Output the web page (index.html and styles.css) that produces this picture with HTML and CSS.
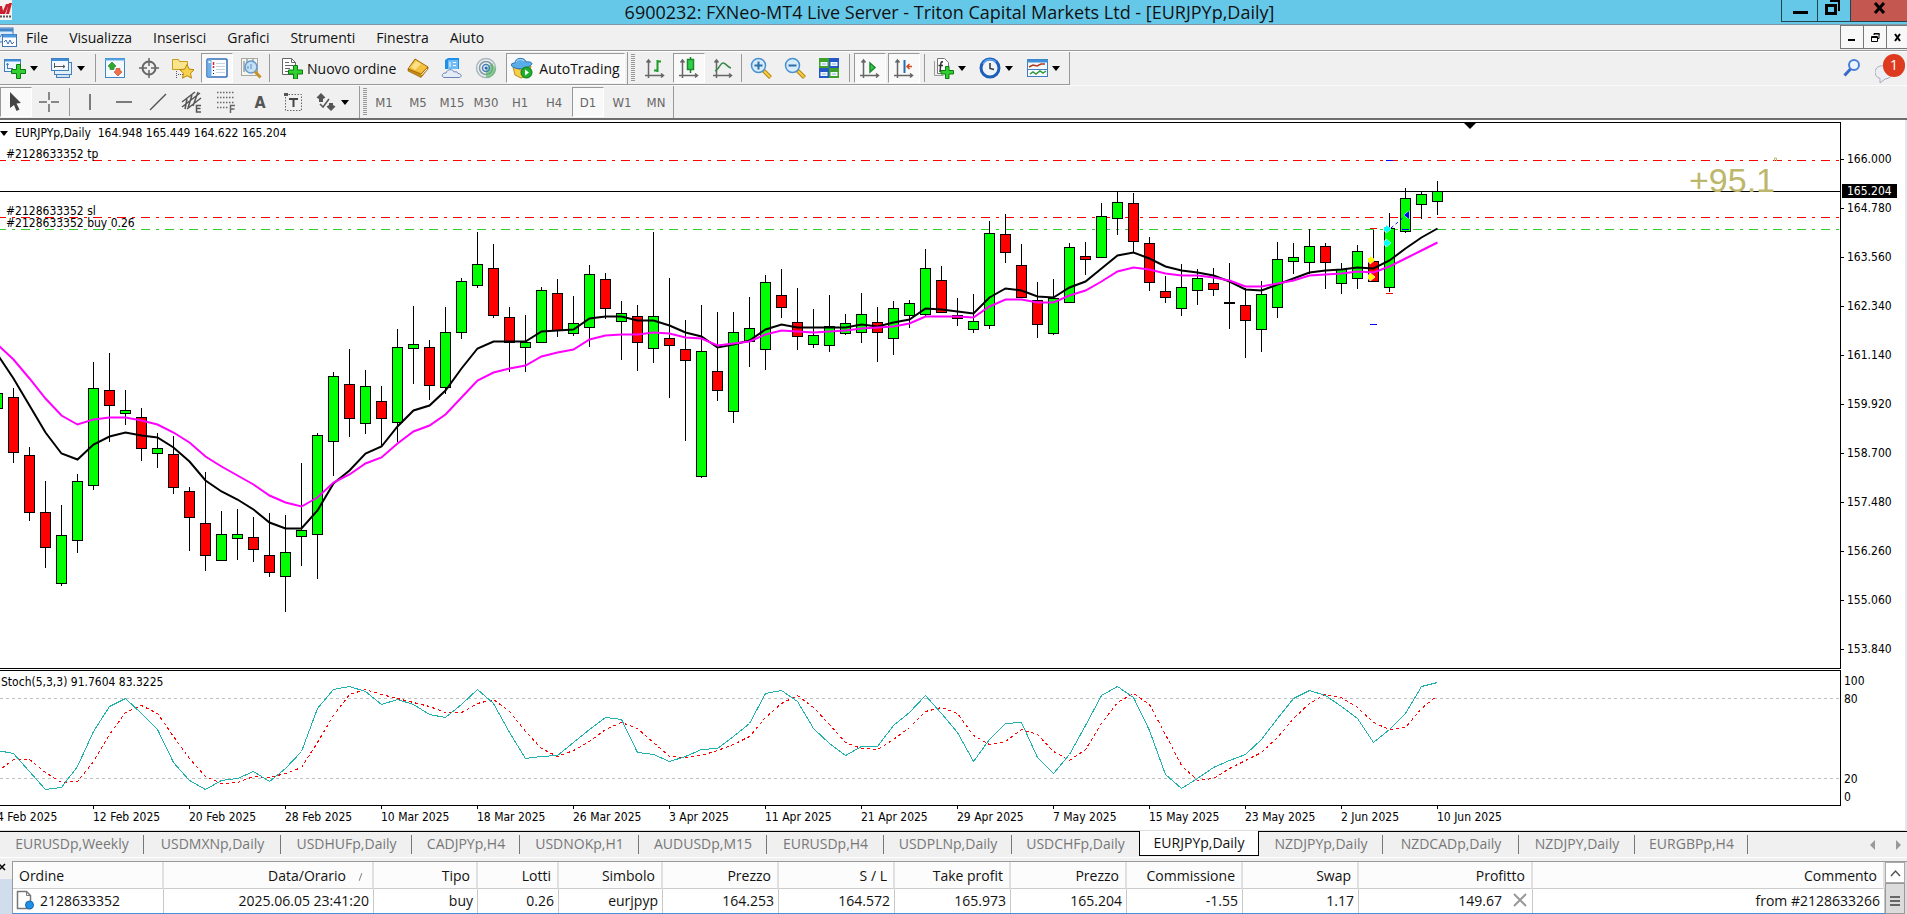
FILE: index.html
```html
<!DOCTYPE html>
<html lang="it">
<head>
<meta charset="utf-8">
<title>6900232: FXNeo-MT4 Live Server - Triton Capital Markets Ltd - [EURJPYp,Daily]</title>
<link rel="stylesheet" href="styles.css">
</head>
<body>
<div class="app">
  <header class="titlebar">
    <svg class="app-logo" width="12" height="20" viewBox="0 0 12 20" aria-hidden="true"><rect width="12" height="20" fill="#f6f2f2"/><path d="M-2 6h4l1 5 3-7h3l-4 10H-2zM9 3h3l-3 11H6z" fill="#c8202c"/><path d="M0 16.500h11" stroke="#555" stroke-width="2" stroke-dasharray="2 1"/></svg>
    <h1 class="title">6900232: FXNeo-MT4 Live Server - Triton Capital Markets Ltd - [EURJPYp,Daily]</h1>
    <div class="win-buttons">
      <button class="win-btn win-min" aria-label="Riduci a icona"><svg width="36" height="22" viewBox="0 0 36 22"><path d="M11 11h15v3H11z"/></svg></button>
      <button class="win-btn win-max" aria-label="Ripristina"><svg width="32" height="22" viewBox="0 0 32 22"><path d="M8.500 5.500h9v8h-9z" fill="none" stroke="#000" stroke-width="3"/><path d="M12 1h9v10" fill="none" stroke="#000" stroke-width="2"/></svg></button>
      <button class="win-btn win-close" aria-label="Chiudi"><svg width="56" height="22" viewBox="0 0 56 22"><path d="M24 3l9 10M33 3l-9 10" stroke="#000" stroke-width="3"/></svg></button>
    </div>
  </header>

  <div class="menubar">
    <svg class="doc-icon" width="18" height="21" viewBox="0 0 18 21" aria-hidden="true"><rect x="-2" y="1" width="15" height="14" fill="#d8ebfa" stroke="#3f74b5"/><path d="M-2 3h15" stroke="#3f86c8" stroke-width="3"/><path d="M0 10l2-3 2 4" fill="none" stroke="#3870c0"/><rect x="2.500" y="7.500" width="14" height="12" fill="#fff" stroke="#3f74b5"/><path d="M3 9h13" stroke="#4c9be0" stroke-width="3"/><path d="M4 15l2-2 2 4 2-4 2 4 2-2" fill="none" stroke="#3870c0"/></svg>
    <nav class="menu">
      <button class="menu-item">File</button><button class="menu-item">Visualizza</button><button class="menu-item">Inserisci</button><button class="menu-item">Grafici</button><button class="menu-item">Strumenti</button><button class="menu-item">Finestra</button><button class="menu-item">Aiuto</button>
    </nav>
    <div class="mdi-buttons">
      <button class="mdi-btn" aria-label="Riduci grafico"><svg width="22" height="22" viewBox="0 0 22 22"><path d="M7 13h7v2H7z"/></svg></button>
      <button class="mdi-btn" aria-label="Ripristina grafico"><svg width="22" height="22" viewBox="0 0 22 22"><path d="M7.500 10.500h6v5h-6zM7 11.500h7M10 9V7.500h5v5h-1M10 8h6" fill="none" stroke="#000"/></svg></button>
      <button class="mdi-btn" aria-label="Chiudi grafico"><svg width="22" height="22" viewBox="0 0 22 22"><path d="M8 8l5 7M13 8l-5 7" stroke="#000" stroke-width="2"/></svg></button>
    </div>
  </div>

  <div class="toolbar-row">
    <div class="toolbar toolbar-main">
      <button class="tool tool-drop" aria-label="Nuovo grafico"><svg class="ico" viewBox="0 0 22 22"><rect x=".5" y="2.500" width="16" height="12" fill="#eef7ff" stroke="#3f7fc0"/><path d="M1 3.500h15" stroke="#3f8fd8" stroke-width="2"/><path d="M3.500 12V7m-1 1l1-2 1 2M3 11.500h6" stroke="#4a7aa8" fill="none"/><path d="M12.500 7.500h4v5h5v4h-5v5h-4v-5h-5v-4h5z" fill="#2fd02f" stroke="#0c7a12"/></svg><i class="caret"></i></button>
      <button class="tool tool-drop" aria-label="Profili"><svg class="ico" viewBox="0 0 22 22"><rect x="5.500" y="9.500" width="13" height="11" fill="#cfe3f5" stroke="#4a7fb5"/><rect x="3.500" y="5.500" width="17" height="12" fill="#e2f0fb" stroke="#4a7fb5"/><rect x=".5" y="1.500" width="17" height="12" fill="#f3f9ff" stroke="#3f7fc0"/><path d="M1 3h16" stroke="#3f8fd8" stroke-width="2"/><path d="M3.500 6v5M3 9.500h11M12 8l2 1.500-2 1.500" stroke="#555" fill="none"/></svg><i class="caret"></i></button>
      <i class="sep"></i>
      <button class="tool" aria-label="Market Watch"><svg class="ico" viewBox="0 0 22 22"><rect x="1.500" y="1.500" width="19" height="19" fill="#f4fbff" stroke="#3f86c8"/><path d="M1 2.500h20" stroke="#56a4e4" stroke-width="2"/><path d="M8 5l4 4-2 1.500v2H6v-2L4 9z" fill="#2ea82e" stroke="#1a7a1a" stroke-width=".6"/><path d="M14 19l-4-4 2-1.500v-2h4v2l2 1.500z" fill="#f07048" stroke="#c03a18" stroke-width=".6"/></svg></button>
      <button class="tool" aria-label="Finestra dati"><svg class="ico" viewBox="0 0 22 22" fill="none" stroke="#666"><circle cx="11" cy="11" r="6.500" stroke-width="2"/><path d="M11 1v8M11 13v8M1 11h8M13 11h8" stroke-width="1.500"/></svg></button>
      <button class="tool" aria-label="Navigatore"><svg class="ico" viewBox="0 0 22 22"><path d="M.5 2.500h6l1 2h8v8H.5z" fill="#fbe58a" stroke="#c99a20"/><path d="M4.500 14v7M6 17.500h5" stroke="#555" stroke-dasharray="1 1"/><path d="M15 7.500l2.200 4.600 5 .6-3.700 3.500 1 5L15 18.700l-4.500 2.500 1-5-3.700-3.500 5-.6z" fill="#f8d24a" stroke="#b8860b"/></svg></button>
      <button class="tool pressed" aria-label="Terminale"><svg class="ico" viewBox="0 0 22 22"><rect x="1" y="2" width="20" height="18" rx="1" fill="#fff" stroke="#2f6fb5" stroke-width="1.500"/><rect x="1.500" y="2.500" width="4" height="17" fill="#6fb0ec"/><path d="M3.500 4v2" stroke="#fff" stroke-width="2"/><path d="M10 6.500h9M10 9.500h9M10 12.500h9M10 15.500h9" stroke="#c7d4e2"/><path d="M7.500 5v3M7.500 9v2" stroke="#d22" stroke-width="1.500"/><path d="M7 13.500h1M7 16.500h1" stroke="#111"/></svg></button>
      <button class="tool" aria-label="Strategy Tester"><svg class="ico" viewBox="0 0 22 22"><rect x="1.500" y="1.500" width="16" height="17" fill="#f5f5f0" stroke="#a8a8a0"/><path d="M4 4v11M7 2v9M13 2v5" stroke="#777"/><circle cx="11" cy="10" r="6" fill="#bfe0f7" fill-opacity=".9" stroke="#6699cc" stroke-width="1.500"/><path d="M11 7v5M8 9v3" stroke="#5a88b8"/><path d="M15 14.500l5.500 6" stroke="#c8922a" stroke-width="3"/></svg></button>
      <i class="sep"></i>
      <button class="tool tool-text tool-order"><svg class="ico" viewBox="0 0 22 22"><path d="M1.500 1.500h9l4 4v12h-13z" fill="#fff" stroke="#666"/><path d="M10.500 1.500v4h4M4 5.500h4M4 8.500h8M4 11.500h5M4 14.500h3" stroke="#666" fill="none"/><path d="M12.500 8.500h4v4.500h5v4h-5v5h-4v-5h-5v-4h5z" fill="#2fd02f" stroke="#0c7a12"/></svg>Nuovo ordine</button>
      <button class="tool" aria-label="MetaEditor"><svg class="ico" viewBox="0 0 22 22"><path d="M1 12L8 2l13 8-6 9z" fill="#e8a820" stroke="#9a6a08"/><path d="M2 11l6.500-8L20 10l-6 6z" fill="#f4c040"/><path d="M4 10l5-6 5 3-6 6z" fill="#fbe08a"/><path d="M1 12l13 5 7-7v2l-7 8.500L1 14z" fill="#c98a10" stroke="#8a5c06" stroke-width=".6"/><path d="M14.500 18l5.500-6" stroke="#fff"/></svg></button>
      <button class="tool" aria-label="VPS"><svg class="ico" viewBox="0 0 22 22"><path d="M4 3l3-2h11v11H4z" fill="#1e90e8"/><path d="M7 3h10v9H7z" fill="#6fbdf8"/><path d="M9 5v5M12 5.500h3M12 8.500h3" stroke="#fff"/><path d="M3 20.500c-3-1-2-5 2-4.500 1-4 7-4.500 8-1 3-1 4 1 4 1.500 4 0 4 4 1 4z" fill="#e4ecf8" stroke="#6a84b8"/></svg></button>
      <button class="tool" aria-label="Segnali"><svg class="ico" viewBox="0 0 22 22" fill="none"><circle cx="11" cy="11" r="9.500" stroke="#a9b8bf" stroke-width="1.500"/><circle cx="11" cy="11" r="6.500" stroke="#7f9aa8" stroke-width="1.500"/><path d="M11 11v10a10 10 0 0 0 10-9l-4-6z" fill="#4fb65c" fill-opacity=".6"/><circle cx="11" cy="11" r="3.500" stroke="#4a7fb5" stroke-width="1.500"/><circle cx="11" cy="11" r="1.500" fill="#2a6ad0"/></svg></button>
      <button class="tool tool-text tool-auto pressed"><svg class="ico" viewBox="0 0 22 22"><path d="M2 10l8 3 10-4-2 9-8 3-6-3z" fill="#f5cf48" stroke="#b8901a"/><path d="M0 8c0-2 4-2 4-2 0-6 10-6 11-1 3-.5 6 0 6 2-3 5-18 7-21 1z" fill="#5aaee8" stroke="#2a78b8"/><path d="M5 5c1-3 6-3 8-1" stroke="#bfe2fb" fill="none"/><circle cx="15.500" cy="15.500" r="5.500" fill="#1faf2f" stroke="#0c7a12"/><path d="M14 12.500l4 3-4 3z" fill="#fff"/></svg>AutoTrading</button>
      <i class="sep sep-end"></i><i class="grip"></i>
      <button class="tool" aria-label="Grafico a barre"><svg class="ico" viewBox="0 0 22 22" fill="none" stroke="#666" stroke-width="1.500"><path d="M4.500 3v18M1 18.500h18M2.500 5.500l2-2.500 2 2.500M17 16.500l2.500 2-2.500 2"/><path d="M13.500 3v12M13 4.500h4M10 13.500h4" stroke="#1c9a2c" stroke-width="2"/></svg></button>
      <button class="tool pressed" aria-label="Grafico a candele"><svg class="ico" viewBox="0 0 22 22" fill="none" stroke="#666" stroke-width="1.500"><path d="M4.500 3v18M1 18.500h18M2.500 5.500l2-2.500 2 2.500M17 16.500l2.500 2-2.500 2"/><path d="M12.500 0v16" stroke="#1c7a2c"/><rect x="9.500" y="2.500" width="6" height="10" fill="#2fd04a" stroke="#1c8a2c"/></svg></button>
      <button class="tool" aria-label="Grafico a linea"><svg class="ico" viewBox="0 0 22 22" fill="none" stroke="#666" stroke-width="1.500"><path d="M4.500 3v18M1 18.500h18M2.500 5.500l2-2.500 2 2.500M17 16.500l2.500 2-2.500 2"/><path d="M3 14c4-1 5-8 8-8s4 4 8 5" stroke="#3a8a4a"/></svg></button>
      <i class="sep"></i>
      <button class="tool" aria-label="Ingrandisci"><svg class="ico" viewBox="0 0 22 22"><path d="M13.500 13.500l7 7" stroke="#b8860b" stroke-width="4"/><path d="M14 14l6 6" stroke="#f5cf48" stroke-width="2"/><circle cx="8.500" cy="8.500" r="7" fill="#d4ecfb" stroke="#4a8fd0" stroke-width="1.500"/><path d="M4.500 8.500h8M8.500 4.500v8" stroke="#2f6fa8" stroke-width="2"/></svg></button>
      <button class="tool" aria-label="Riduci"><svg class="ico" viewBox="0 0 22 22"><path d="M13.500 13.500l7 7" stroke="#b8860b" stroke-width="4"/><path d="M14 14l6 6" stroke="#f5cf48" stroke-width="2"/><circle cx="8.500" cy="8.500" r="7" fill="#d4ecfb" stroke="#4a8fd0" stroke-width="1.500"/><path d="M4.500 8.500h8" stroke="#2f6fa8" stroke-width="2"/></svg></button>
      <button class="tool" aria-label="Affianca"><svg class="ico" viewBox="0 0 22 22"><path d="M1 1h10v10H1zM11 11h10v10H11z" fill="#3fa02a"/><path d="M11 1h10v10H11zM1 11h10v10H1z" fill="#2458c8"/><path d="M2.500 5h7v4h-7zM12.500 5h7v4h-7zM2.500 15h7v4h-7zM12.500 15h7v4h-7z" fill="#eef6ff"/><path d="M4 7h4M14 7h4M4 17h4M14 17h4" stroke="#8fb0d8"/></svg></button>
      <i class="sep sep-wide"></i>
      <button class="tool pressed" aria-label="Scorrimento automatico"><svg class="ico" viewBox="0 0 22 22" fill="none" stroke="#666" stroke-width="1.500"><path d="M4.500 3v18M1 18.500h18M2.500 5.500l2-2.500 2 2.500M17 16.500l2.500 2-2.500 2"/><path d="M11 6l5 4.500-5 4.500z" fill="#2fd04a" stroke="#1c8a2c"/></svg></button>
      <button class="tool pressed" aria-label="Spostamento grafico"><svg class="ico" viewBox="0 0 22 22" fill="none" stroke="#666" stroke-width="1.500"><path d="M4.500 3v18M1 18.500h18M2.500 5.500l2-2.500 2 2.500M17 16.500l2.500 2-2.500 2"/><path d="M11.500 3v13" stroke="#1f6fb8" stroke-width="2"/><path d="M14 9.500h5M16.500 7l-2.500 2.500 2.500 2.500" stroke="#d04a18" stroke-width="1.500"/></svg></button>
      <i class="sep sep-wide"></i>
      <button class="tool tool-drop" aria-label="Indicatori"><svg class="ico" viewBox="0 0 22 22"><path d="M5.500 1.500h7l4 4v11h-11z" fill="#fff" stroke="#777"/><path d="M2.500 4v14.500h9" fill="none" stroke="#999"/><path d="M11 5c-3-1-2 3-3 10M6.500 8.500H11" stroke="#333" fill="none" stroke-width="1.500"/><path d="M13.500 9.500h3.500v4h4.500v3.500H17v4.500h-3.500V17H9v-3.500h4.500z" fill="#2fd02f" stroke="#0c7a12"/></svg><i class="caret"></i></button>
      <button class="tool tool-drop" aria-label="Periodi"><svg class="ico" viewBox="0 0 22 22"><circle cx="11" cy="11" r="9" fill="#eef3f8" stroke="#1d5fb8" stroke-width="3"/><path d="M4 7a8 8 0 0 1 13-2" stroke="#5aa4ec" stroke-width="1.500" fill="none"/><path d="M11 6v5.500l4 1" stroke="#333" fill="none" stroke-width="1.500"/></svg><i class="caret"></i></button>
      <button class="tool tool-drop" aria-label="Modelli"><svg class="ico" viewBox="0 0 22 22"><rect x="1.500" y="2.500" width="20" height="17" fill="#f4faff" stroke="#3f7fc0"/><path d="M1 4h21" stroke="#3f8fd8" stroke-width="3"/><path d="M1 12.500h21" stroke="#3f7fc0"/><path d="M3 10l4-2 4 1 4-2h4" stroke="#b03a20" fill="none" stroke-width="1.500"/><path d="M4 17l3-2 3 2 4-3 3 2 3-2" stroke="#2f9a3a" fill="none" stroke-width="1.500"/></svg><i class="caret"></i></button>
    </div>
    <div class="status-tools">
      <button class="tool-bare" aria-label="Cerca"><svg width="18" height="20" viewBox="0 0 18 20" fill="none"><circle cx="11" cy="7" r="5" stroke="#4a7fd8" stroke-width="2" fill="#eaf3ff"/><path d="M7.500 11l-6 6.500" stroke="#3868c8" stroke-width="3"/></svg></button>
      <button class="tool-bare notice" aria-label="Notifiche"><svg width="20" height="22" viewBox="0 0 20 22"><path d="M9 4a8 6.500 0 0 1 1 13l-5 4v-4.500A7 6.500 0 0 1 9 4z" fill="#eceef4" stroke="#a8acb8"/></svg><span class="badge">1</span></button>
    </div>
  </div>

  <div class="toolbar-row toolbar-row-2">
    <div class="toolbar toolbar-draw">
      <button class="tool pressed tool-cursor" aria-label="Cursore"><svg class="ico" viewBox="0 0 22 22"><path d="M5 1l11 11-4.500.5 3 6-3 1.500-2.500-6L5 17z" fill="#444"/></svg></button>
      <button class="tool" aria-label="Mirino"><svg class="ico" viewBox="0 0 22 22" stroke="#666" stroke-width="1.500"><path d="M11 1v8M11 13v8M1 11h8M13 11h8"/></svg></button>
      <i class="sep sep-wide"></i>
      <button class="tool" aria-label="Linea verticale"><svg class="ico" viewBox="0 0 22 22" stroke="#555" stroke-width="1.500"><path d="M11 3v16"/></svg></button>
      <button class="tool" aria-label="Linea orizzontale"><svg class="ico" viewBox="0 0 22 22" stroke="#555" stroke-width="1.500"><path d="M3 11h16"/></svg></button>
      <button class="tool" aria-label="Trendline"><svg class="ico" viewBox="0 0 22 22" stroke="#555" stroke-width="1.500"><path d="M3 19L19 3"/></svg></button>
      <button class="tool" aria-label="Canale equidistante"><svg class="ico" viewBox="0 0 22 22" fill="none" stroke="#555" stroke-width="1.500"><path d="M1 16L19 2M1 11L14 1M6 18L20 7M6 8l-2 10M11 4L7 17M17 1l-5 14"/><path d="M20 14.500h-4.500v6.500H20M15.500 17.500h4"/></svg></button>
      <button class="tool" aria-label="Fibonacci"><svg class="ico" viewBox="0 0 22 22" fill="none" stroke="#666" stroke-width="1.500"><path d="M2 1.500h18M2 6.500h18M2 11.500h18M2 16.500h11" stroke-dasharray="1.500 1.500"/><path d="M15.500 22v-7.500H20M15.500 18h4"/></svg></button>
      <button class="tool tool-letter" aria-label="Testo">A</button>
      <button class="tool" aria-label="Etichetta"><svg class="ico" viewBox="0 0 22 22" fill="none" stroke="#666"><path d="M2.500 3.500h16v16h-16z" stroke-dasharray="1.500 1.500"/><path d="M6 8h9M10.500 7v9" stroke="#444" stroke-width="2"/><path d="M1 2h4v3H1z" fill="#555" stroke="none"/></svg></button>
      <button class="tool tool-drop" aria-label="Frecce"><svg class="ico" viewBox="0 0 22 22"><path d="M6 2l4.500 4.500L8 8v3H4V8L1.500 6.500zM16 20l-4.500-4.500L14 14v-2h4v2l2.500 1.500z" fill="#555"/><path d="M5 13l3 3 6-8" stroke="#555" stroke-width="1.500" fill="none"/></svg><i class="caret"></i></button>
      <i class="sep sep-end"></i><i class="grip"></i>
      <button class="tf">M1</button><button class="tf">M5</button><button class="tf">M15</button><button class="tf">M30</button><button class="tf">H1</button><button class="tf">H4</button><button class="tf pressed">D1</button><button class="tf">W1</button><button class="tf">MN</button>
    </div>
  </div>

  <main class="chart">
    <section class="pane pane-price">
      <div class="plot">
        <svg id="price" class="canvas" role="img" aria-label="EURJPYp Daily"></svg>
        <p class="caption"><i class="caret"></i>EURJPYp,Daily&nbsp; 164.948 165.449 164.622 165.204</p>
        <p class="order order-tp">#2128633352 tp</p>
        <p class="order order-sl">#2128633352 sl</p>
        <p class="order order-buy">#2128633352 buy 0.26</p>
        <p class="pips">+95.1</p>
      </div>
      <div class="axis">
        <ul class="prices"><li>166.000</li><li>164.780</li><li>163.560</li><li>162.340</li><li>161.140</li><li>159.920</li><li>158.700</li><li>157.480</li><li>156.260</li><li>155.060</li><li>153.840</li></ul>
        <span class="bid">165.204</span>
      </div>
    </section>
    <section class="pane pane-stoch">
      <div class="plot">
        <svg id="stoch" class="canvas" role="img" aria-label="Stocastico"></svg>
        <p class="caption caption-stoch">Stoch(5,3,3) 91.7604 83.3225</p>
      </div>
      <div class="axis levels"><div><span>100</span><span>80</span></div><div><span>20</span><span>0</span></div></div>
    </section>
    <ol class="dates"><li>4 Feb 2025</li><li>12 Feb 2025</li><li>20 Feb 2025</li><li>28 Feb 2025</li><li>10 Mar 2025</li><li>18 Mar 2025</li><li>26 Mar 2025</li><li>3 Apr 2025</li><li>11 Apr 2025</li><li>21 Apr 2025</li><li>29 Apr 2025</li><li>7 May 2025</li><li>15 May 2025</li><li>23 May 2025</li><li>2 Jun 2025</li><li>10 Jun 2025</li></ol>
  </main>

  <div class="tabs">
    <div class="tab-list"><button class="tab">EURUSDp,Weekly</button><button class="tab">USDMXNp,Daily</button><button class="tab">USDHUFp,Daily</button><button class="tab">CADJPYp,H4</button><button class="tab">USDNOKp,H1</button><button class="tab">AUDUSDp,M15</button><button class="tab">EURUSDp,H4</button><button class="tab">USDPLNp,Daily</button><button class="tab before">USDCHFp,Daily</button><button class="tab current">EURJPYp,Daily</button><button class="tab">NZDJPYp,Daily</button><button class="tab">NZDCADp,Daily</button><button class="tab">NZDJPY,Daily</button><button class="tab">EURGBPp,H4</button></div>
    <div class="tab-scroll"><button class="tool-bare" aria-label="Schede precedenti"><svg width="6" height="10" viewBox="0 0 6 10"><path d="M5 0v10L0 5z" fill="#999"/></svg></button><button class="tool-bare" aria-label="Schede successive"><svg width="6" height="10" viewBox="0 0 6 10"><path d="M1 0v10l5-5z" fill="#999"/></svg></button></div>
  </div>

  <section class="terminal">
    <div class="dock"><button class="tool-bare dock-close" aria-label="Chiudi terminale"><svg width="12" height="17" viewBox="0 0 12 17"><path d="M-1 3l6 6M5 3l-6 6" stroke="#000" stroke-width="1.500"/></svg></button><div class="dock-side"></div></div>
    <table class="orders">
      <colgroup><col class="w150"><col class="w210"><col class="w104"><col class="w81"><col class="w104"><col class="w116"><col class="w116"><col class="w116"><col class="w116"><col class="w116"><col class="w116"><col class="w174"><col></colgroup>
      <thead><tr><th>Ordine</th><th class="sorted">Data/Orario<i class="slash"></i></th><th>Tipo</th><th>Lotti</th><th>Simbolo</th><th>Prezzo</th><th>S / L</th><th>Take profit</th><th>Prezzo</th><th>Commissione</th><th>Swap</th><th>Profitto</th><th>Commento</th></tr></thead>
      <tbody><tr><td><span class="ticket"><svg width="18" height="20" viewBox="0 0 18 20"><path d="M1.500 1.500h9l4 4v13h-13z" fill="#fff" stroke="#777" stroke-width="1.500"/><path d="M10.500 1.500v4h4" fill="none" stroke="#777"/><circle cx="13.500" cy="15" r="4" fill="#1e90e8" stroke="#1566a8"/></svg>2128633352</span></td><td>2025.06.05 23:41:20</td><td>buy</td><td>0.26</td><td>eurjpyp</td><td>164.253</td><td>164.572</td><td>165.973</td><td>165.204</td><td>-1.55</td><td>1.17</td><td><span class="profit">149.67<button class="tool-bare" aria-label="Chiudi ordine"><svg width="14" height="14" viewBox="0 0 14 14"><path d="M1 1l12 12M13 1L1 13" stroke="#999" stroke-width="2"/></svg></button></span></td><td>from #2128633266</td></tr></tbody>
    </table>
    <div class="scroll"><button class="scroll-up" aria-label="Scorri su"><svg width="20" height="19" viewBox="0 0 20 19"><path d="M5 13l4.500-5 4.500 5" fill="none" stroke="#555" stroke-width="1.500"/></svg></button><div class="scroll-thumb"><i></i><i></i><i></i></div></div>
  </section>
</div>
<script src="chart.js"></script>
</body>
</html>
```

FILE: styles.css
```css
* { box-sizing: border-box; }
body { margin: 0; font-family: "Open Sans", "Noto Sans", sans-serif; font-size: 14px; color: #111; background: #f0f0f0; }
button { font: inherit; color: inherit; background: none; border: 0; padding: 0; margin: 0; }
svg { display: block; flex: none; }
p, ul, ol, h1 { margin: 0; padding: 0; list-style: none; font-weight: normal; }
.app { display: flex; flex-direction: column; height: 100vh; overflow: hidden; }

.titlebar { flex: none; height: 25px; display: flex; align-items: flex-start; background: #66c8e9; border-bottom: 1px solid #7d98a6; }
.app-logo { width: 12px; }
.title { flex: 1; padding-left: 106px; text-align: center; font-size: 18px; line-height: 24px; white-space: nowrap; }
.win-buttons { display: flex; }
.win-btn { height: 22px; border: 1px solid #23434f; border-top: 0; border-right: 0; overflow: hidden; }
.win-min { width: 36px; }
.win-max { width: 33px; }
.win-close { width: 57px; background: #c4574f; }

.menubar { flex: none; height: 26px; display: flex; align-items: center; border-bottom: 1px solid #999; }
.doc-icon { width: 18px; }
.menu { flex: 1; display: flex; gap: 21px; padding-left: 8px; }
.menu-item { line-height: 24px; }
.mdi-buttons { display: flex; align-self: flex-start; overflow: hidden; width: 67px; }
.mdi-btn { flex: none; width: 23px; height: 24px; background: #f8f8f8; border: 1px solid #777; border-right: 0; }

.toolbar-row { flex: none; height: 34px; display: flex; justify-content: space-between; border-top: 1px solid #fff; }
.toolbar-row-2 { height: 35px; border-bottom: 2px solid #6e6e6e; border-top-color: #fbfbfb; }
.toolbar { display: flex; align-items: center; border-right: 1px solid #999; }
.toolbar-main { border-bottom: 1px solid #999; }
.tool { flex: none; width: 34px; height: 30px; display: flex; align-items: center; justify-content: center; border: 1px solid transparent; }
.ico { width: 22px; height: 22px; }
.pressed { background: #f9f9f9; border-color: #999 #fff #fff #999; }
.tool.pressed { width: 32px; margin: 0 1px; }
.tool-drop { width: 47px; gap: 4px; padding-left: 3px; justify-content: flex-start; }
.tool-cursor.tool { margin: 0; }
.tool-text, .tool-text.tool.pressed { width: auto; gap: 4px; padding: 0 4px; }
.tool-text.tool-order { padding-left: 8px; }
.tool-text.tool.pressed { margin: 0 1px 0 3px; gap: 6px; }
.tool-letter { font: bold 16px "DejaVu Sans Condensed", sans-serif; color: #555; }
.caret { flex: none; width: 8px; border: 4px solid transparent; border-top: 5px solid #000; border-bottom: 0; }
.sep { flex: none; width: 1px; height: 28px; margin: 0 2px 0 1px; background: #999; }
.sep-wide { margin: 0 3px; }
.sep-end { height: 32px; margin: 0 3px 0 1px; }
.grip { flex: none; width: 4px; height: 28px; margin-right: 3px; background: repeating-linear-gradient(#999 0 1px, #f0f0f0 1px 2px); }
.toolbar-draw .grip { margin-right: 0; }
.status-tools { display: flex; align-items: flex-start; gap: 14px; padding: 6px 12px 0 0; }
.tool-bare { display: block; }
.notice { position: relative; padding-top: 4px; }
.badge { position: absolute; left: 8px; top: -4px; width: 22px; height: 23px; border-radius: 11px; background: #dd3a20; color: #fff; line-height: 22px; }
.tf { width: 34px; height: 30px; font: 13px "DejaVu Sans Condensed", sans-serif; color: #666; border: 1px solid transparent; }
.tf.pressed { width: 32px; margin: 0 1px; border-color: #999 #fff #fff #999; }

.chart { flex: 1; min-height: 0; display: flex; flex-direction: column; padding-top: 2px; background: #fff; font: 12px/14px "DejaVu Sans Condensed", sans-serif; color: #000; border-right: 2px solid #e4e8ee; }
.pane { display: flex; min-height: 0; }
.pane-price { flex: 1; margin-bottom: 1px; }
.pane-stoch { flex: none; height: 136px; }
.plot { position: relative; flex: 1; border: 1px solid #000; border-left: 0; overflow: hidden; }
.canvas { position: absolute; inset: 0; width: 100%; height: 100%; }
.caption, .order, .pips { position: absolute; white-space: nowrap; }
.caption { left: 0; top: 3px; display: flex; align-items: center; gap: 7px; }
.caption-stoch { left: 1px; top: 4px; }
.order { left: 6px; }
.order-tp { top: 24px; }
.order-sl { top: 81px; }
.order-buy { top: 93px; }
.pips { right: 65px; top: 37px; font: 34px/40px "Liberation Sans", sans-serif; color: #bdb76b; }
.axis { position: relative; flex: none; width: 64px; }
.prices { padding-top: 13px; }
.prices li { height: 49px; line-height: 49px; display: flex; align-items: center; gap: 3px; }
.prices li::before { content: ""; width: 3px; height: 1px; background: #000; }
.bid { position: absolute; left: 1px; top: 62px; padding: 0 5px; line-height: 14px; background: #000; color: #fff; }
.levels { display: flex; flex-direction: column; justify-content: space-between; padding: 2px 0 0 3px; }
.levels span { display: block; line-height: 18px; }
.dates { flex: none; height: 25px; display: flex; margin-left: -3px; overflow: hidden; border-bottom: 1px solid #ddd; }
.dates li { flex: none; width: 96px; padding-top: 4px; white-space: nowrap; background: linear-gradient(#000, #000) 0 0 / 1px 3px no-repeat; }

.tabs { flex: none; height: 27px; display: flex; justify-content: space-between; border-top: 1px solid #000; border-bottom: 1px solid #fff; color: #777; }
.tab-list { display: grid; grid-template-columns: 144px 137px 131px 108px 119px 128px 117px 128px 127px 120px 124px 136px 116px 113px; }
.tab { height: 25px; padding-bottom: 2px; line-height: 22px; white-space: nowrap; background: linear-gradient(#777, #777) 100% 50% / 1px 19px no-repeat; }
.tab.before { background: none; }
.tab.current { height: 25px; margin-top: -1px; padding-bottom: 0; background: #fff; border: 1px solid #000; border-top: 0; color: #111; }
.tab-scroll { display: flex; gap: 19px; align-items: center; padding-right: 6px; }

.terminal { flex: none; height: 56px; display: flex; padding-top: 3px; }
.dock { width: 12px; flex: none; }
.dock-side { height: 36px; margin-top: 1px; background: #cfdded; }
.orders { flex: 1; width: 100%; height: 53px; table-layout: fixed; border-collapse: separate; border-spacing: 0; background: #fff; border-top: 1px solid #999; border-left: 1px solid #999; border-bottom: 1px solid #3f92dc; white-space: nowrap; }
.w150 { width: 151px; } .w210 { width: 210px; } .w104 { width: 104px; } .w81 { width: 81px; } .w116 { width: 116px; } .w174 { width: 174px; }
.orders th { height: 27px; padding: 0 6px; text-align: right; font-weight: normal; background: #fcfcfc; border-right: 2px solid #e0e0e0; border-bottom: 1px solid #ccc; }
.orders td { height: 24px; padding: 0 4px 2px; text-align: right; border-right: 1px solid #c8c8c8; }
.orders th:first-child, .orders td:first-child { text-align: left; }
.orders td:first-child { padding-left: 3px; }
.orders th.sorted { padding-right: 11px; }
.slash { display: inline-block; width: 1px; height: 8px; margin-left: 14px; background: #888; transform: rotate(20deg); }
.ticket, .profit { display: flex; align-items: center; gap: 6px; }
.profit { justify-content: flex-end; gap: 11px; padding-right: 1px; }
.scroll { flex: none; width: 22px; border-top: 1px solid #999; background: #dcdcdc; padding-right: 2px; }
.scroll-up { display: block; width: 20px; height: 21px; background: #fff; border: 1px solid #aaa; }
.scroll-thumb { height: 31px; border: 1px solid #999; background: #dcdcdc; display: flex; flex-direction: column; gap: 2px; align-items: center; padding-top: 12px; }
.scroll-thumb i { width: 10px; height: 2px; background: #666; }
```

FILE: chart.js
```js
// Bars are 16px apart. Each block holds heights in thirds of a pixel below its own base line.
var STEP = 16, FIRST = 13.5, NS = "http://www.w3.org/2000/svg";

function add(parent, name, attrs) {
  var el = document.createElementNS(NS, name);
  for (var k in attrs) el.setAttribute(k, attrs[k]);
  parent.appendChild(el);
  return el;
}
function barX(i) { return FIRST + i * STEP; }
function row(base, v) { return base + Math.floor(v / 3) + 0.5; }

// [base, "high top bottom low colour; ..."]
var candles = [
  [177, "275 280 326 326 G;265 292 458 486 R;442 466 638 662 R;544 637 743 803 R;616 706 851 857 G;523 544 722 758 G;187 265 557 567 G;160 271 317 425 R;270 331 341 374 G;324 352 446 482 R;400 445 461 503 G;408 463 563 581 R;562 574 653 752 R;517 670 767 812 R;634 703 782 782 G;628 703 716 779 G;652 712 749 785 R;640 766 818 830 R;646 757 830 935 G;490 691 710 797 G;400 406 704 836 G;217 229 425 527 G;148 253 356 410 R;211 259 371 401 G;259 304 356 437 R;88 142 368 425 G;19 133 146 251 G;121 142 257 299 R;22 97 263 281 G"],
  [77, "235 244 398 416 G;97 193 257 263 G;133 205 347 353 R;322 352 428 515 R;346 427 443 515 G;262 271 428 428 G;238 280 392 410 R;289 370 401 407 G;196 223 383 440 G;220 238 326 356 R;304 340 365 479 G;316 349 428 512 R;97 349 446 488 G;235 415 437 593 R;361 448 482 722 R;316 454 830 833 G;337 514 572 602 R;337 397 635 668 G;292 385 425 500 G;226 247 449 509 G;208 286 323 353 R;265 367 410 449 R;328 406 434 443 G;286 379 437 455 G;343 370 401 404 G;280 343 398 428 G;322 367 398 485 R;304 325 416 464 G;301 310 347 383 G"],
  [47, "238 295 434 437 G;289 331 428 428 R;385 436 446 467 R;373 454 479 488 G;154 190 467 476 G;133 193 248 278 R;223 286 383 383 R;337 391 464 503 R;328 385 491 494 G;220 232 398 398 G;217 259 269 314 R;100 139 263 263 G;67 97 146 194 G;70 100 215 248 R;202 220 338 362 R;319 364 383 398 R;283 352 416 437 G;298 325 362 404 G;295 340 359 377 R;280 398 400 476 R;355 406 452 563 R;334 373 479 545 G;217 268 413 443 G;220 262 275 310 G;178 229 278 310 G;220 229 278 356 R;280 298 341 371 G;226 244 326 356 G;180 274 335 335 R"],
  [17, "220 265 443 455 G;145 175 275 278 G;155 163 194 236 G;124 154 185 224 G"]
];
var fast = [
  [177, [163, 235, 316, 397, 460, 477, 433, 409, 396, 406, 412, 443, 484, 542, 575, 599, 629, 667, 684, 684, 632, 549, 511, 460, 440, 379, 331, 317, 272]],
  [77, [505, 445, 424, 423, 423, 394, 392, 388, 355, 349, 348, 362, 362, 376, 397, 409, 441, 434, 421, 388, 374, 383, 383, 383, 383, 374, 378, 367, 358]],
  [47, [416, 418, 425, 430, 383, 356, 361, 380, 381, 352, 334, 295, 256, 248, 265, 289, 301, 308, 317, 334, 358, 360, 343, 325, 307, 301, 298, 291, 295]],
  [17, [362, 325, 293, 266]]
];
var slow = [
  [177, [132, 177, 234, 295, 346, 372, 358, 352, 351, 361, 373, 398, 428, 469, 499, 525, 553, 587, 607, 619, 591, 547, 522, 490, 472, 430, 394, 376, 344]],
  [77, [592, 541, 517, 505, 497, 468, 457, 449, 417, 405, 402, 402, 398, 399, 412, 414, 435, 431, 424, 403, 392, 393, 396, 395, 391, 385, 383, 379, 370]],
  [47, [438, 438, 440, 441, 408, 387, 388, 396, 396, 375, 361, 334, 303, 293, 298, 311, 315, 316, 322, 332, 348, 348, 340, 330, 315, 313, 310, 303, 306]],
  [17, [380, 354, 330, 308]]
];
var stochMain = [[-11, [272, 281, 335, 388, 382, 318, 214, 138, 116, 160, 208, 308, 361, 388, 361, 354, 334, 363, 325, 274, 144, 89, 79, 94, 133, 118, 134, 163, 172, 133, 89, 131, 216, 295, 290, 287, 248, 208, 172, 178, 277, 284, 303, 290, 269, 265, 228, 190, 100, 91, 123, 206, 250, 286, 260, 260, 196, 158, 107, 160, 217, 304, 238, 190, 187, 293, 340, 283, 196, 106, 79, 112, 212, 344, 384, 355, 323, 301, 283, 237, 175, 115, 91, 106, 140, 174, 247, 208, 160, 79, 68]]];
var stochSignal = [[-11, [335, 298, 298, 338, 366, 363, 303, 224, 158, 136, 160, 229, 294, 350, 370, 367, 349, 352, 341, 322, 248, 167, 103, 89, 103, 115, 126, 138, 157, 157, 131, 119, 154, 215, 265, 289, 270, 244, 208, 188, 206, 248, 288, 292, 287, 271, 254, 229, 173, 130, 107, 142, 194, 247, 265, 268, 238, 202, 154, 142, 160, 226, 252, 244, 208, 224, 275, 302, 268, 190, 128, 100, 133, 222, 316, 360, 356, 325, 301, 277, 233, 175, 130, 104, 112, 142, 187, 209, 203, 146, 106]]];

function series(svg, blocks, attrs) {
  var i = -1, pts = [];
  blocks.forEach(function (b) {
    b[1].forEach(function (v) { pts.push(barX(i++) + "," + row(b[0], v)); });
  });
  attrs.points = pts.join(" ");
  attrs.fill = "none";
  add(svg, "polyline", attrs);
}
function level(svg, y, color, dash, from) {
  add(svg, "line", { x1: from || 0, x2: "100%", y1: y, y2: y, stroke: color, "stroke-dasharray": dash });
}

var price = document.getElementById("price");
level(price, 37.5, "#f00", "9 6 3 6", -3);
level(price, 94.5, "#f00", "9 6 3 6", -3);
level(price, 106.5, "#32cd32", "9 6 3 6", -3);
level(price, 68.5, "#000", "none");

var i = -1;
candles.forEach(function (block) {
  block[1].split(";").forEach(function (text) {
    var c = text.split(" "), x = barX(i++), top = row(block[0], c[1]), bottom = row(block[0], c[2]);
    add(price, "line", { x1: x, x2: x, y1: row(block[0], c[0]) - 0.5, y2: row(block[0], c[3]) + 0.5, stroke: "#000" });
    add(price, "rect", { x: x - 5, y: top, width: 10, height: Math.max(bottom - top, 1), fill: c[4] === "G" ? "#0f0" : "#f00", stroke: "#000" });
  });
});
series(price, fast, { stroke: "#000", "stroke-width": 2 });
series(price, slow, { stroke: "#f0f", "stroke-width": 2 });

// Trade marks: stop and target dashes, entries, exit
[[1386, 37.5, "#00f"], [1370, 105.5, "#f00"], [1386, 170.5, "#f00"], [1370, 201.5, "#00f"], [1402, 106.5, "#00f"]].forEach(function (m) {
  add(price, "line", { x1: m[0], x2: m[0] + 7, y1: m[1], y2: m[1], stroke: m[2] });
});
[[1368, 137, "#ff0"], [1368, 154, "#ff0"], [1384, 106, "#0ff"], [1384, 120, "#0ff"]].forEach(function (m) {
  add(price, "path", { d: "M" + m[0] + " " + (m[1] - 2) + "h2v-2l5 4-5 4v-2h-2z", fill: m[2], stroke: "#fff", "stroke-width": 1, "paint-order": "stroke" });
});
add(price, "path", { d: "M1391 105l13-11", stroke: "#00f", "stroke-dasharray": "3 3" });
add(price, "path", { d: "M1404 92l5-4v8z", fill: "#00f", stroke: "#fff", "paint-order": "stroke" });
add(price, "path", { d: "M1464 0h12l-6 6z" });
add(price, "path", { d: "M1774.500 38v-3h2v3", fill: "none", stroke: "#bdb76b" });

var stoch = document.getElementById("stoch");
level(stoch, 27.5, "#c0c0c0", "3 3");
level(stoch, 107.5, "#c0c0c0", "3 3");
series(stoch, stochSignal, { stroke: "#f00", "stroke-dasharray": "3 3", "shape-rendering": "crispEdges" });
series(stoch, stochMain, { stroke: "#20b2aa", "shape-rendering": "crispEdges" });
```
